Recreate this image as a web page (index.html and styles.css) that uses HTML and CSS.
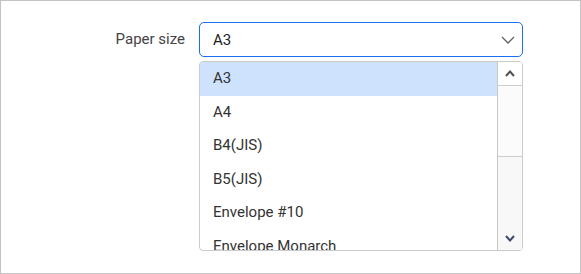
FILE: index.html
```html
<!DOCTYPE html>
<html>
<head>
<meta charset="utf-8">
<link rel="stylesheet" href="styles.css">
</head>
<body>
<div class="frame">
  <div class="field">
    <div class="label">Paper size</div>
    <div class="control">
      <div class="select">
        <span class="value">A3</span>
        <svg class="chev" width="14" height="8" viewBox="0 0 14 8"><path d="M1 1 L7 7 L13 1" fill="none" stroke="#5f6368" stroke-width="1.3"/></svg>
      </div>
      <div class="list">
        <div class="options">
          <div class="opt sel">A3</div>
          <div class="opt">A4</div>
          <div class="opt">B4(JIS)</div>
          <div class="opt">B5(JIS)</div>
          <div class="opt">Envelope #10</div>
          <div class="opt">Envelope Monarch</div>
        </div>
        <div class="scroll">
          <div class="btn up"><svg width="10" height="7" viewBox="0 0 10 7"><path d="M1 6 L5 1.5 L9 6" fill="none" stroke="#505050" stroke-width="2"/></svg></div>
          <div class="thumb"></div>
          <div class="track"></div>
          <div class="btn down"><svg width="10" height="7" viewBox="0 0 10 7"><path d="M1 1 L5 5.5 L9 1" fill="none" stroke="#3d4a66" stroke-width="2"/></svg></div>
        </div>
      </div>
    </div>
  </div>
</div>
</body>
</html>
```

FILE: styles.css
```css
html, body {
  margin: 0;
  padding: 0;
}
body {
  font-family: Roboto, "Liberation Sans", sans-serif;
  color: #333;
}
.frame {
  box-sizing: border-box;
  width: 581px;
  height: 274px;
  border: 1px solid #c3c3c3;
  padding-top: 21px;
  overflow: hidden;
}
.field {
  display: flex;
  align-items: flex-start;
}
.label {
  width: 184px;
  text-align: right;
  font-size: 15px;
  line-height: 35px;
  color: #444;
  padding-right: 14px;
}
.control {
  width: 324px;
  display: flex;
  flex-direction: column;
  gap: 4px;
}
.select {
  box-sizing: border-box;
  height: 35px;
  border: 1px solid #1a6ef0;
  border-radius: 5px;
  display: flex;
  align-items: center;
  justify-content: space-between;
  padding: 0 7px 0 13px;
  font-size: 15px;
  color: #222;
}
.chev {
  display: block;
}
.list {
  box-sizing: border-box;
  height: 190px;
  border: 1px solid #cbcbcb;
  border-radius: 4px;
  display: flex;
  overflow: hidden;
}
.options {
  flex: 1;
  overflow: hidden;
}
.opt {
  height: 33.6px;
  line-height: 33.6px;
  padding-left: 13px;
  font-size: 15px;
  color: #333;
  white-space: nowrap;
}
.opt.sel {
  background: #cee1fd;
}
.scroll {
  width: 24px;
  border-left: 1px solid #c8c8c8;
  display: flex;
  flex-direction: column;
  background: #f8f8f8;
}
.btn {
  height: 23px;
  display: flex;
  align-items: center;
  justify-content: center;
  background: #fff;
}
.btn.down {
  background: #f8f8f8;
}
.thumb {
  height: 70px;
  border-top: 1px solid #cdcdcd;
  border-bottom: 1px solid #cdcdcd;
  background: #fbfbfb;
}
.track {
  flex: 1;
}
```
